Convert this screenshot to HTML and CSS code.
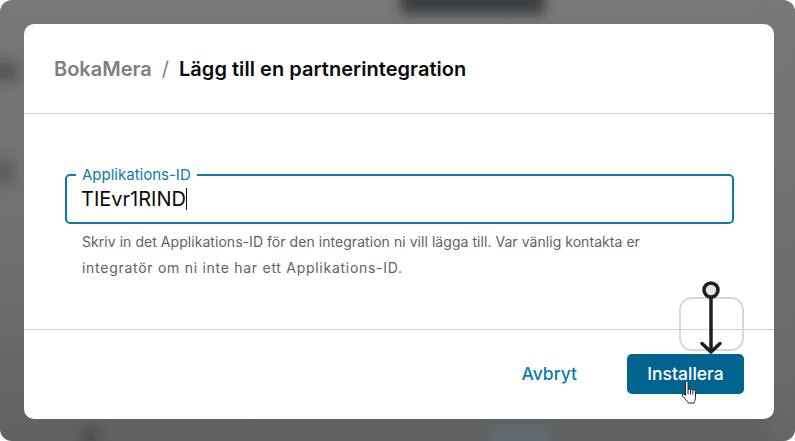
FILE: index.html
```html
<!DOCTYPE html>
<html lang="sv">
<head>
<meta charset="utf-8">
<title>Lägg till en partnerintegration</title>
<link rel="stylesheet" href="styles.css">
</head>
<body>
<div class="backdrop">
  <div class="blob blob-top"></div>
  <div class="blob blob-left"></div>
  <div class="blob blob-left2"></div>
  <div class="blob blob-bottom"></div>
  <div class="blob blob-bottom2"></div>
  <div class="blob blob-corner"></div>
  <section class="modal">
    <header class="modal-header">
      <span class="crumb">BokaMera</span>
      <span class="slash">/</span>
      <h1 class="title">Lägg till en partnerintegration</h1>
    </header>
    <div class="modal-body">
      <fieldset class="field">
        <legend class="field-label">Applikations-ID</legend>
        <div class="field-value">TIEvr1RIND<span class="caret"></span></div>
      </fieldset>
      <p class="help">Skriv in det Applikations-ID för den integration ni vill lägga till. Var vänlig kontakta er <span class="help-end">integratör om ni inte har ett Applikations-ID.</span></p>
    </div>
    <footer class="modal-footer">
      <button class="btn btn-text">Avbryt</button>
      <button class="btn btn-primary">Installera</button>
    </footer>
    <svg class="hint" width="70" height="80" viewBox="0 0 70 80" fill="none">
      <rect x="4" y="17" width="63" height="52" rx="12" stroke="#d8d8d8" stroke-width="2"/>
      <path d="M35 13V71" stroke="#1f1f1f" stroke-width="3.500"/>
      <path d="M26 62.500L35 71L44 62.500" stroke="#1f1f1f" stroke-width="3.500" stroke-linecap="round" stroke-linejoin="round"/>
      <circle cx="35" cy="9" r="7" fill="#e6e6e6" stroke="#1f1f1f" stroke-width="3.500"/>
    </svg>
    <svg class="cursor" width="16" height="24" viewBox="0 0 16 24">
      <path d="M5 1.500C5.900.7 7 1.200 7 2.500V9.500C8 9 8.900 9 9.500 9.600C10.500 9.100 11.400 9.300 11.800 10C12.900 9.600 14.500 10 14.500 11.500V17.500C14.500 20 13.500 21 13 23H7.500C6.500 21 4 19 1.500 16C.5 14.800 1.500 13 3 14L4.500 15.500V3C4.500 2.400 4.600 1.900 5 1.500Z" fill="#fff" stroke="#1a1f36" stroke-width="1"/>
      <path d="M7 9.500V14.500M9.500 9.600V14.500M11.800 10V14.500" stroke="#1a1f36" stroke-width="1"/>
    </svg>
  </section>
</div>
</body>
</html>
```
FILE: styles.css
```css
* { box-sizing: border-box; }
html, body { margin: 0; padding: 0; background: #fff; }
body { width: 795px; height: 441px; overflow: hidden; font-family: Inter, "Liberation Sans", sans-serif; }
.backdrop {
  position: relative;
  width: 795px;
  height: 441px;
  padding: 24px 21px 22px 24px;
  border-radius: 12px;
  overflow: hidden;
  background: linear-gradient(180deg, #777879 0%, #707071 55%, #606161 100%);
}
.blob { position: absolute; filter: blur(6px); }
.blob-top { left: 400px; top: -16px; width: 145px; height: 30px; background: #3c4043; border-radius: 6px; }
.blob-left { left: -12px; top: 60px; width: 30px; height: 22px; background: #55585a; }
.blob-left2 { left: -12px; top: 160px; width: 26px; height: 24px; background: #5c5e60; }
.blob-bottom { left: 82px; top: 428px; width: 16px; height: 20px; background: #4a4c4e; }
.blob-bottom2 { left: 490px; top: 428px; width: 60px; height: 20px; background: #5f6c70; }
.blob-corner { left: 770px; top: 0; width: 30px; height: 441px; background: linear-gradient(180deg, #787879, #676767); }
.modal {
  position: relative;
  display: flex;
  flex-direction: column;
  width: 750px;
  height: 395px;
  background: #fff;
  border-radius: 10px;
}
.modal-header {
  display: flex;
  align-items: center;
  gap: 10px;
  height: 90px;
  flex: none;
  padding: 0 30px;
  border-bottom: 1px solid #ccd0d6;
  font-size: 20px;
  font-weight: 600;
}
.crumb { color: #7c7f82; }
.slash { color: #7c7f82; font-weight: 400; }
.title { margin: 0; font-size: inherit; font-weight: 600; color: #0a0a0a; letter-spacing: 0.04px; }
.modal-body { flex: 1; padding: 52px 40px 0 41px; }
.field {
  margin: 0;
  height: 58px;
  padding: 0 15px;
  border: 2px solid #0a7cab;
  border-radius: 5px;
}
.field-label {
  padding: 0 6px;
  margin: 0 0 0 -6px;
  font-size: 15px;
  line-height: 17px;
  color: #0a7cab;
}
.field-value {
  display: flex;
  align-items: center;
  height: 24px;
  margin: 4px 0 0 -1px;
  font-size: 20px;
  line-height: 24px;
  color: #0a0a0a;
}
.caret { display: block; width: 1px; height: 22px; background: #111; }
.help {
  margin: 5px 0 0;
  padding: 0 17px;
  font-size: 14px;
  line-height: 26px;
  letter-spacing: 0.05px;
  color: #5d6368;
}
.help-end { display: block; letter-spacing: 0.72px; }
.modal-footer {
  flex: none;
  display: flex;
  align-items: center;
  justify-content: flex-end;
  gap: 50px;
  height: 90px;
  padding: 0 30px 2px 0;
  border-top: 1px solid #ccd0d6;
}
.btn { border: 0; padding: 0; font-family: inherit; font-size: 17.500px; font-weight: 500; background: none; }
.btn-text { color: #0a7cab; }
.btn-primary { width: 117px; height: 40px; border-radius: 5px; background: #00648f; color: #fff; }
.hint { position: absolute; left: 652px; top: 257px; }
.cursor { position: absolute; left: 657px; top: 356px; }
```
